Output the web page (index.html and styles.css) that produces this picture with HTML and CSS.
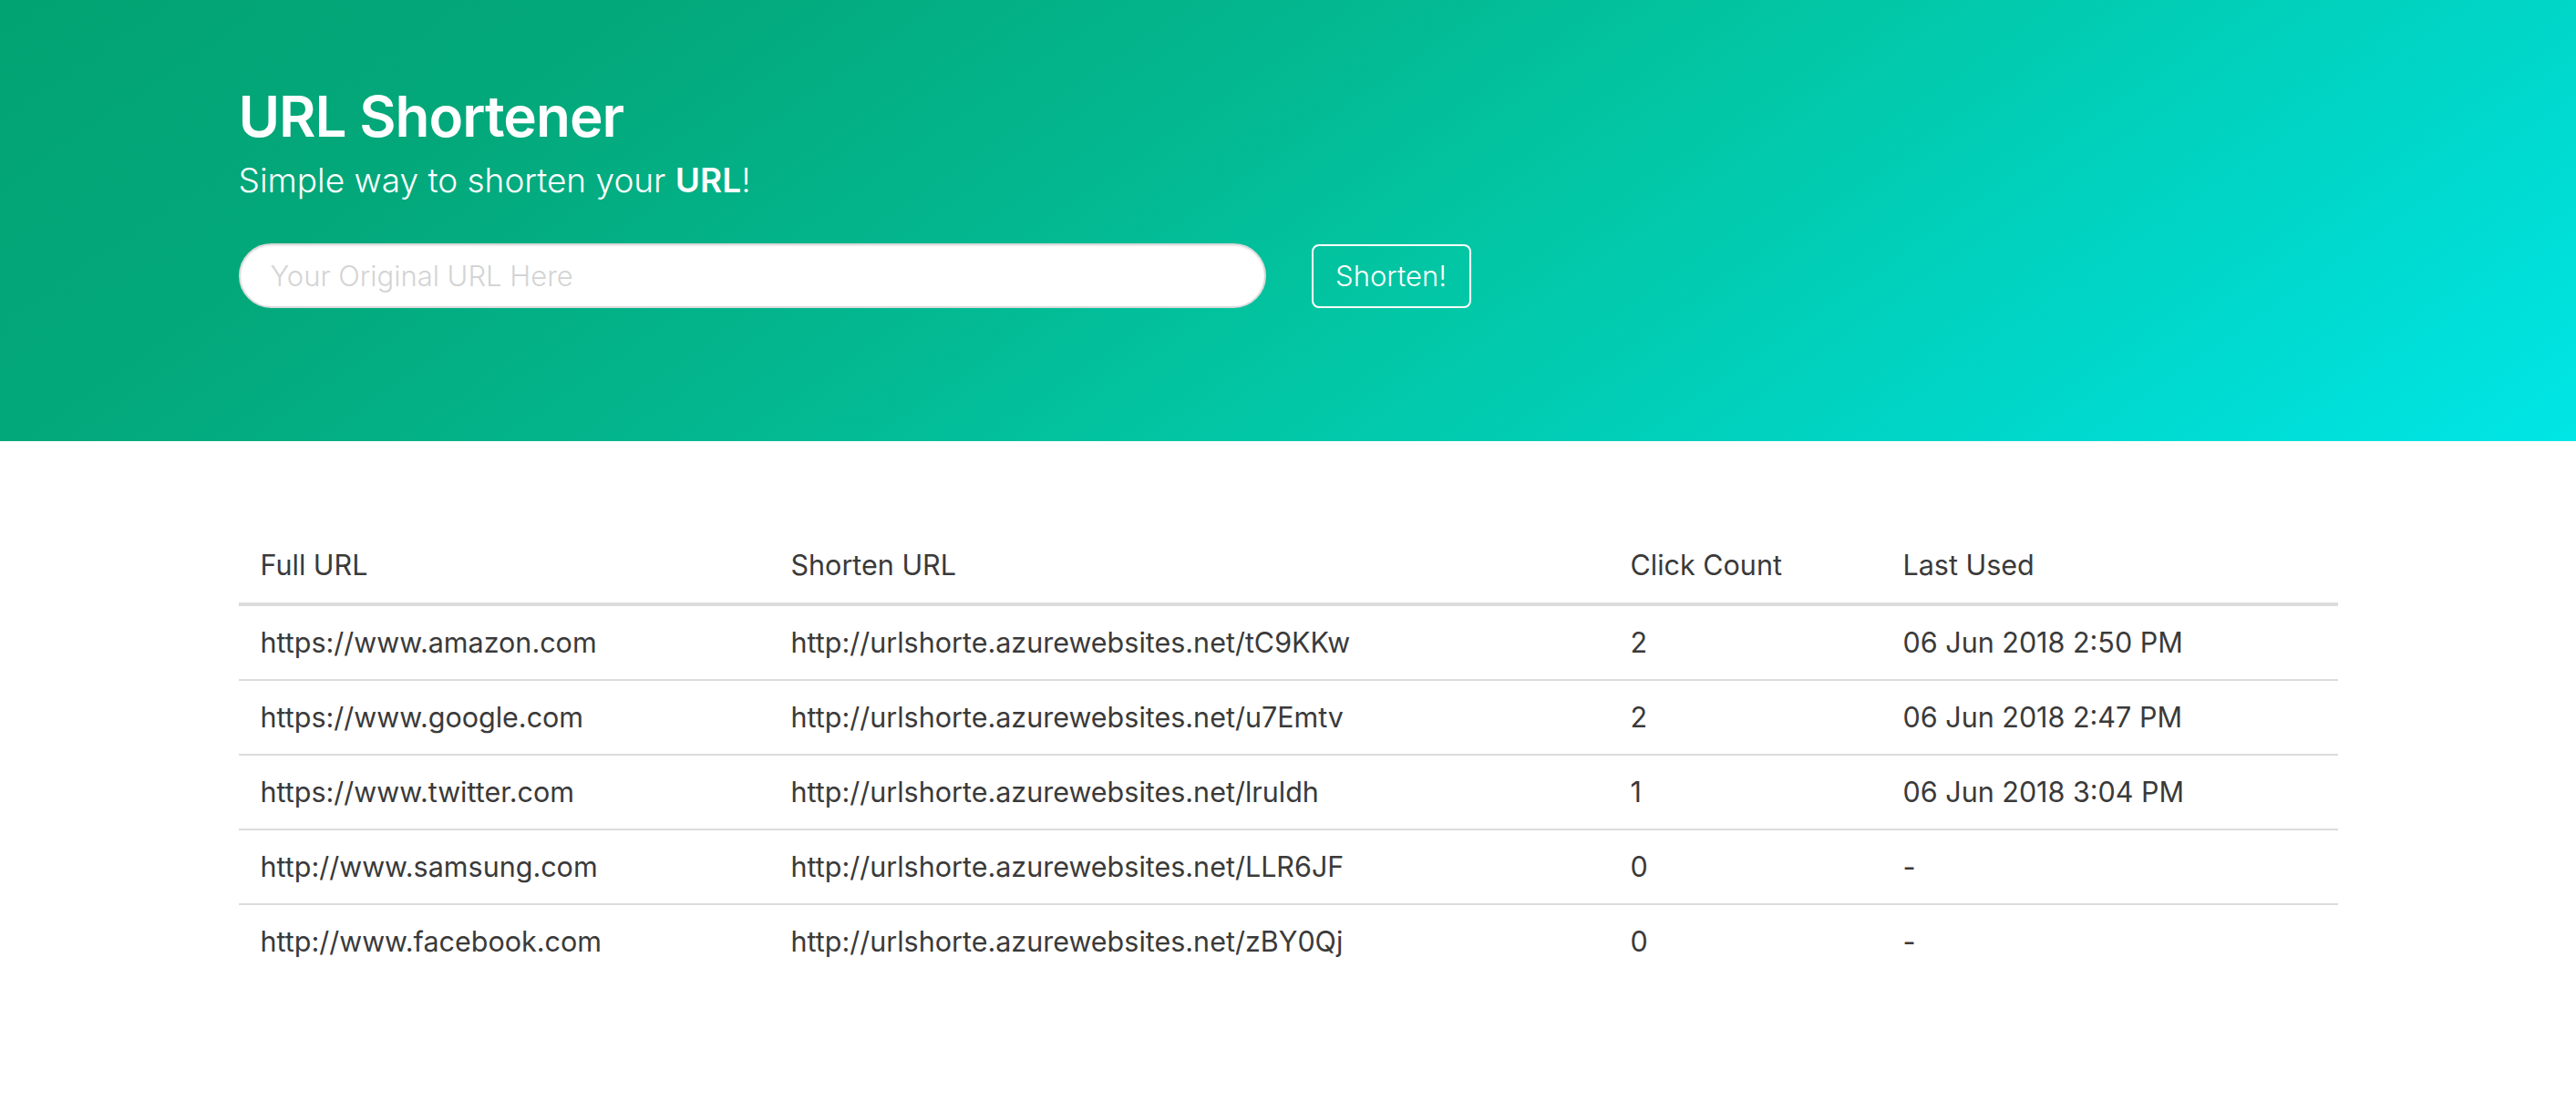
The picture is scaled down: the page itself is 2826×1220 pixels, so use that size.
FILE: index.html
```html
<!DOCTYPE html>
<html lang="en">
<head>
<meta charset="utf-8">
<title>URL Shortener</title>
<link rel="stylesheet" href="styles.css">
</head>
<body>
<header class="hero">
  <div class="container">
    <h1 class="title">URL Shortener</h1>
    <p class="subtitle">Simple way to shorten your <strong>URL</strong>!</p>
    <form class="shorten-form">
      <input class="url-input" type="text" placeholder="Your Original URL Here">
      <button class="shorten-btn" type="button">Shorten!</button>
    </form>
  </div>
</header>
<main class="container">
  <table class="url-table">
    <colgroup>
      <col class="col-full">
      <col class="col-short">
      <col class="col-count">
      <col class="col-last">
    </colgroup>
    <thead>
      <tr><th>Full URL</th><th>Shorten URL</th><th>Click Count</th><th>Last Used</th></tr>
    </thead>
    <tbody>
      <tr><td>https://www.amazon.com</td><td>http://urlshorte.azurewebsites.net/tC9KKw</td><td>2</td><td>06 Jun 2018 2:50 PM</td></tr>
      <tr><td>https://www.google.com</td><td>http://urlshorte.azurewebsites.net/u7Emtv</td><td>2</td><td>06 Jun 2018 2:47 PM</td></tr>
      <tr><td>https://www.twitter.com</td><td>http://urlshorte.azurewebsites.net/lruldh</td><td>1</td><td>06 Jun 2018 3:04 PM</td></tr>
      <tr><td>http://www.samsung.com</td><td>http://urlshorte.azurewebsites.net/LLR6JF</td><td>0</td><td>-</td></tr>
      <tr><td>http://www.facebook.com</td><td>http://urlshorte.azurewebsites.net/zBY0Qj</td><td>0</td><td>-</td></tr>
    </tbody>
  </table>
</main>
</body>
</html>
```
FILE: styles.css
```css
html, body {
  margin: 0;
  padding: 0;
  background: #ffffff;
}
body {
  font-family: Inter, "Liberation Sans", sans-serif;
  color: #333333;
}
.container {
  width: 2303px;
  margin: 0 auto;
}
.hero {
  height: 484px;
  background: linear-gradient(145deg,
    #02a373 0%,
    #03a87a 20%,
    #03b68e 40%,
    #02c6a4 57%,
    #00d6c8 80%,
    #00e6e6 100%);
  color: #ffffff;
}
.hero .container {
  padding-top: 89px;
}
.title {
  margin: 0;
  font-size: 62px;
  font-weight: 600;
  line-height: 77px;
  letter-spacing: -1px;
}
.subtitle {
  margin: 10px 0 0;
  font-size: 37px;
  font-weight: 300;
  line-height: 43px;
}
.subtitle strong {
  font-weight: 600;
}
.shorten-form {
  display: flex;
  align-items: center;
  margin-top: 48px;
}
.url-input {
  box-sizing: border-box;
  width: 1127px;
  height: 71px;
  border: 2px solid #dadada;
  border-radius: 36px;
  padding: 0 33px;
  font-family: inherit;
  font-size: 31px;
  color: #333;
  background: #fff;
  box-shadow: inset 0 1px 2px rgba(0,0,0,0.08);
  outline: none;
}
.url-input::placeholder {
  color: #d4d4d4;
  font-weight: 300;
}
.shorten-btn {
  box-sizing: border-box;
  margin-left: 50px;
  width: 175px;
  height: 70px;
  border: 2px solid #ffffff;
  border-radius: 8px;
  background: transparent;
  color: #ffffff;
  font-family: inherit;
  font-size: 31px;
  font-weight: 300;
  padding: 0;
}
.url-table {
  width: 100%;
  margin-top: 96px;
  border-collapse: collapse;
  table-layout: fixed;
  font-size: 30.5px;
}
.col-full { width: 582px; }
.col-short { width: 921px; }
.col-count { width: 299px; }
.col-last { width: auto; }
.url-table th,
.url-table td {
  text-align: left;
  padding: 19px 24px;
  line-height: 42px;
  font-weight: 400;
  color: #3a3a3a;
  white-space: nowrap;
}
.url-table th {
  padding-bottom: 20px;
  border-bottom: 4px solid #dcdcdc;
}
.url-table tbody tr + tr td {
  border-top: 2px solid #dcdcdc;
}
```
